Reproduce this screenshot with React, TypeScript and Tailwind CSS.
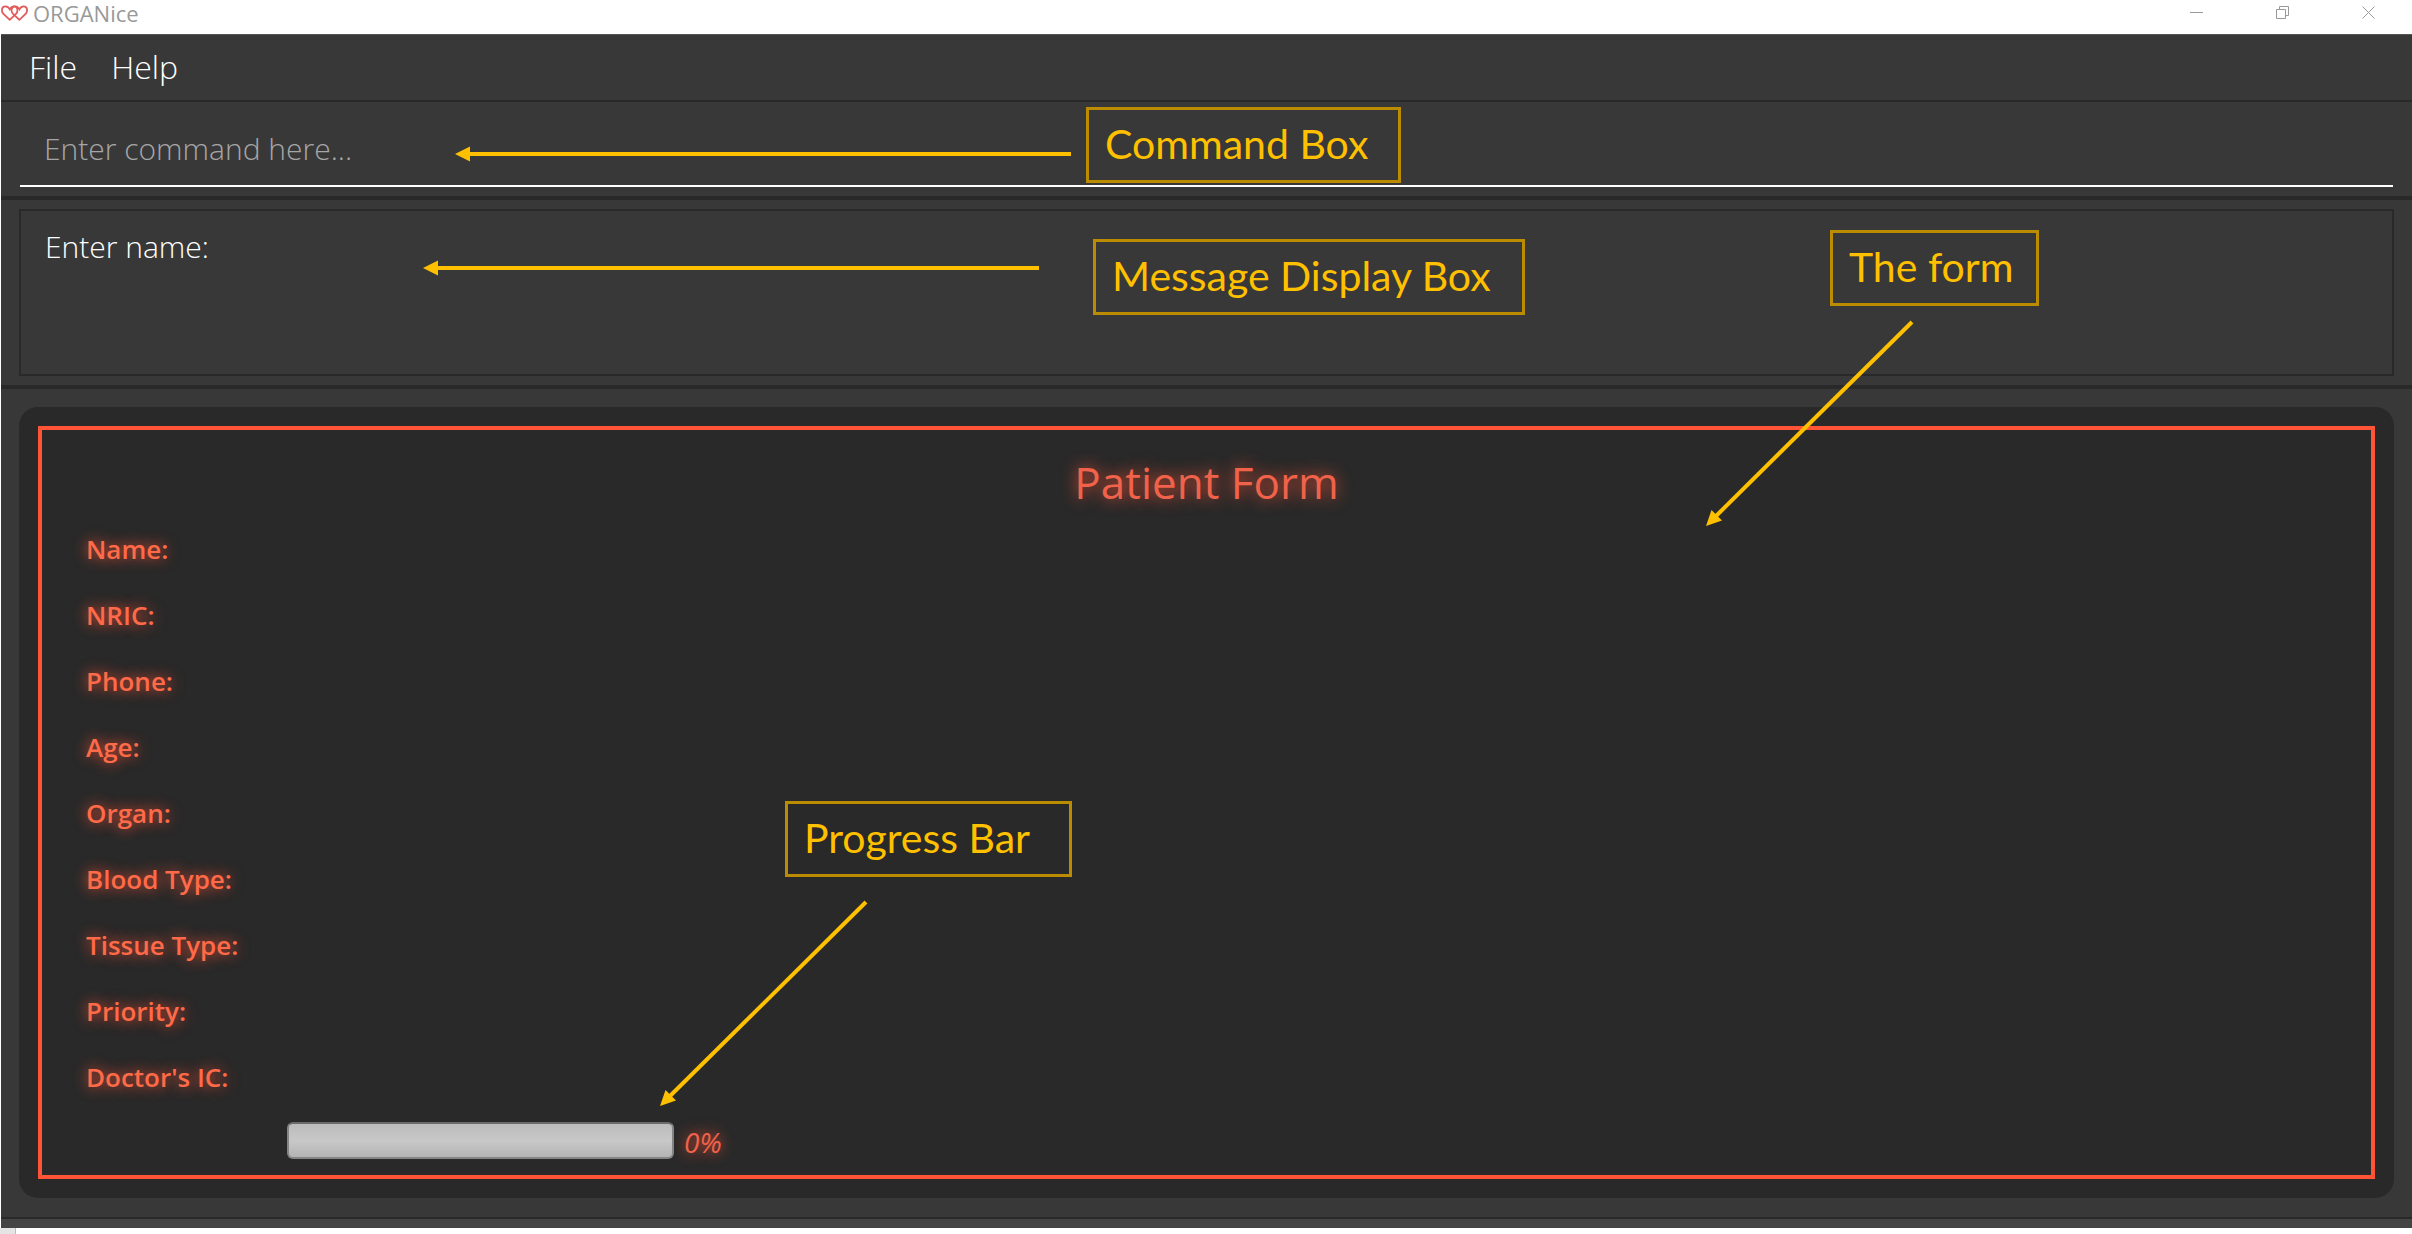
import type { ReactNode } from "react";

const FIELDS = [
  { id: "name", label: "Name:" },
  { id: "nric", label: "NRIC:" },
  { id: "phone", label: "Phone:" },
  { id: "age", label: "Age:" },
  { id: "organ", label: "Organ:" },
  { id: "blood-type", label: "Blood Type:" },
  { id: "tissue-type", label: "Tissue Type:" },
  { id: "priority", label: "Priority:" },
  { id: "doctor-ic", label: "Doctor's IC:" },
];

function Logo() {
  return (
    <svg width="28" height="17" viewBox="0 0 28 17" fill="none" stroke="#e25b5b" strokeWidth="1.8" aria-hidden="true">
      <path d="M9.800 14.800L3.200 8.600C1 6 1.600 1.400 5.400 1.400C7.400 1.400 8.800 2.600 9.800 4.400C10.800 2.600 12.200 1.400 14 1.400C17.800 1.400 18.400 6 16.200 8.600Z" />
      <path d="M19.400 14.800L12.800 8.600C10.600 6 11.200 1.400 15 1.400C17 1.400 18.400 2.600 19.400 4.400C20.400 2.600 21.800 1.400 23.600 1.400C27.400 1.400 28 6 25.800 8.600Z" />
    </svg>
  );
}

function TitleBar() {
  return (
    <header className="flex h-[34px] items-start justify-between bg-white">
      <div className="flex items-center gap-[5px]">
        <Logo />
        <h1 className="text-[22px] leading-[27px] text-[#999999]">ORGANice</h1>
      </div>
      <div className="mr-px flex h-6 text-[#999999]">
        <button aria-label="Minimize" className="flex w-[86px] items-center justify-center">
          <svg width="13" height="13" viewBox="0 0 13 13" stroke="currentColor"><path d="M0 6.500H13" /></svg>
        </button>
        <button aria-label="Restore" className="flex w-[86px] items-center justify-center">
          <svg width="13" height="13" viewBox="0 0 13 13" fill="none" stroke="currentColor">
            <path d="M.5 3.500H9.500V12.500H.5ZM3.500 3.500V.5H12.500V9.500H9.500" />
          </svg>
        </button>
        <button aria-label="Close" className="flex w-[86px] items-center justify-center">
          <svg width="13" height="13" viewBox="0 0 13 13" stroke="currentColor"><path d="M.5 .5L12.500 12.500M12.500 .5L.5 12.500" /></svg>
        </button>
      </div>
    </header>
  );
}

function Callout({ className, children }: { className: string; children: ReactNode }) {
  return (
    <div className={`absolute flex h-[76px] items-center border-[3px] border-[#bc8c00] pb-[2px] pl-4 font-['Lato'] text-[41px] whitespace-nowrap text-[#ffc000] ${className}`}>
      {children}
    </div>
  );
}

function ArrowLeft({ className }: { className: string }) {
  return (
    <svg className={`absolute ${className}`} width="616" height="16" viewBox="0 0 616 16" aria-hidden="true">
      <path d="M12 8H616" stroke="#ffc000" strokeWidth="4" />
      <path d="M0 8L15 .5V15.500Z" fill="#ffc000" />
    </svg>
  );
}

function ArrowDiagonal({ className }: { className: string }) {
  return (
    <svg className={`absolute ${className}`} width="210" height="208" viewBox="0 0 210 208" aria-hidden="true">
      <path d="M8 199L206 3" stroke="#ffc000" strokeWidth="4" />
      <path d="M0 207L5.500 191L16 201.500Z" fill="#ffc000" />
    </svg>
  );
}

export default function App() {
  return (
    <div className="relative flex min-h-screen flex-col overflow-hidden bg-white font-['Open_Sans',sans-serif]">
      <TitleBar />

      <main className="ml-px flex flex-1 flex-col bg-[#383838]">
        <nav className="flex h-[68px] items-center gap-[34px] border-t border-b-2 border-t-[#555555] border-b-[#292929] pb-[2px] pl-7 text-[32px] font-light text-white">
          <button>File</button>
          <button>Help</button>
        </nav>

        <section className="border-b-4 border-[#292929] px-[19px] pt-2 pb-[9px]">
          <input
            aria-label="Command"
            placeholder="Enter command here..."
            className="block h-[77px] w-full border-b-2 border-white bg-transparent px-6 pt-[2px] text-[30px] font-light text-white outline-none placeholder:text-[#a6a6a6]"
          />
        </section>

        <section className="border-b-4 border-[#292929] px-[18px] py-[9px]">
          <textarea
            readOnly
            aria-label="Message"
            value="Enter name:"
            className="block h-[167px] w-full resize-none border-2 border-[#292929] bg-transparent px-6 py-[13px] text-[30px] leading-[45px] font-light text-white outline-none"
          />
        </section>

        <section className="flex flex-1 flex-col px-[18px] pt-[18px] pb-[19px]">
          <form className="flex flex-1 flex-col rounded-[19px] bg-[#292929] p-[19px]">
            <div className="flex flex-1 flex-col border-4 border-[#ff5436] px-11 pt-[18px] pb-4 text-[#ff6a48]">
              <h2 className="text-center text-[44px] leading-[68px] text-[#f0624a] text-shadow-[0_0_16px_#ff5436]">Patient Form</h2>
              <div className="flex flex-col">
                {FIELDS.map(({ id, label }) => (
                  <div key={id} className="flex h-[66px] items-center">
                    <label htmlFor={id} className="text-[26px] font-semibold text-shadow-[0_0_14px_#ff5436]">{label}</label>
                    <output id={id} />
                  </div>
                ))}
              </div>
              <div className="mt-auto flex items-center gap-[10px] pl-[201px]">
                <progress
                  aria-label="Form progress"
                  value={0}
                  max={100}
                  className="h-[37px] w-[387px] appearance-none rounded-[6px] border-2 border-[#858585] border-t-[#6b6b6b] bg-linear-to-b from-[#bcbcbc] via-[#c8c8c8] to-[#b4b4b4] [&::-webkit-progress-bar]:bg-transparent"
                />
                <span className="pt-[2px] text-[28px] leading-8 text-[#f0624a] italic text-shadow-[0_0_14px_#ff5436]">0%</span>
              </div>
            </div>
          </form>
        </section>

        <footer className="h-[11px] border-t-2 border-[#292929] bg-[#444444]" />
      </main>
      <div className="h-[6px] w-4 border-r border-[#bbbbbb] bg-[#e4e4e4]" />

      <Callout className="top-[107px] left-[1086px] w-[315px]">Command Box</Callout>
      <Callout className="top-[239px] left-[1093px] w-[432px]">Message Display Box</Callout>
      <Callout className="top-[230px] left-[1830px] w-[209px]">The form</Callout>
      <Callout className="top-[801px] left-[785px] w-[287px]">Progress Bar</Callout>
      <ArrowLeft className="top-[146px] left-[455px]" />
      <ArrowLeft className="top-[260px] left-[423px]" />
      <ArrowDiagonal className="top-[319px] left-[1706px]" />
      <ArrowDiagonal className="top-[899px] left-[660px]" />
    </div>
  );
}
